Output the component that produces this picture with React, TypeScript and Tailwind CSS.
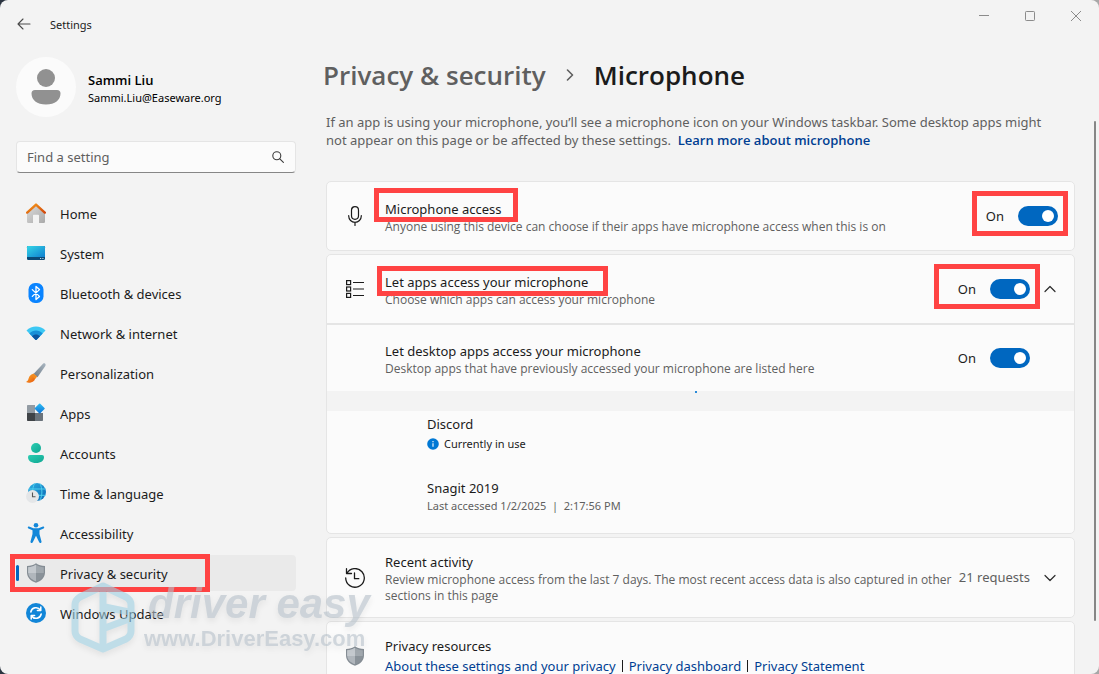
import type { ReactNode } from 'react';

type TNavItem = {
  id: string;
  label: string;
  icon: ReactNode;
};

type THighlightProps = {
  className: string;
};

type TToggleProps = {
  label: string;
  children?: ReactNode;
};

type TSettingTextProps = {
  title: string;
  description: string;
  children?: ReactNode;
};

const HomeIcon = () => (
  <svg viewBox="0 0 20 20" className="size-5" aria-hidden="true">
    <defs>
      <linearGradient id="home-wall" x1="0" y1="0" x2="1" y2="1">
        <stop offset="0" stopColor="#dcdcdc" />
        <stop offset="1" stopColor="#a9a9a9" />
      </linearGradient>
      <linearGradient id="home-roof" x1="0" y1="0" x2="1" y2="1">
        <stop offset="0" stopColor="#f59a1b" />
        <stop offset="1" stopColor="#d3480d" />
      </linearGradient>
    </defs>
    <path d="M1 9.5 10 1.8l9 7.7v9.3a1.2 1.2 0 0 1-1.2 1.2H13v-7.6a.7.7 0 0 0-.7-.7H7.700a.7.7 0 0 0-.7.7V20H2.200A1.200 1.200 0 0 1 1 18.800Z" fill="url(#home-wall)" />
    <path d="M1.200 9.600 10 1.600l8.800 8" fill="none" stroke="url(#home-roof)" strokeWidth="2.400" strokeLinecap="round" strokeLinejoin="round" />
  </svg>
);

const SystemIcon = () => (
  <svg viewBox="0 0 20 20" className="size-5" aria-hidden="true">
    <defs>
      <linearGradient id="system-screen" x1="0" y1="0" x2="1" y2="1">
        <stop offset="0" stopColor="#35d6e6" />
        <stop offset="1" stopColor="#0f7fd0" />
      </linearGradient>
    </defs>
    <rect x="1" y="3" width="18" height="14" rx="1.200" fill="#0b4a77" />
    <path d="M2.200 3h15.600A1.200 1.200 0 0 1 19 4.200V14H1V4.200A1.200 1.200 0 0 1 2.200 3Z" fill="url(#system-screen)" />
    <path d="M14 15.500h1.200M16.300 15.500h1.200" stroke="#b9d6e8" />
  </svg>
);

const BluetoothIcon = () => (
  <svg viewBox="0 0 20 20" className="size-5" aria-hidden="true">
    <rect x="2.500" y="0" width="15" height="20" rx="6.500" fill="#0a84ff" />
    <path d="m6.300 6.600 7.200 6.800L10 16.600V3.400l3.500 3.200-7.200 6.800" fill="none" stroke="#fff" strokeWidth="1.300" strokeLinejoin="round" strokeLinecap="round" />
  </svg>
);

const NetworkIcon = () => (
  <svg viewBox="0 0 20 20" className="size-5" aria-hidden="true">
    <path d="M.5 7.500C5.500 2 14.500 2 19.500 7.500L10.600 16.700a.9.9 0 0 1-1.200 0Z" fill="#3cc8f4" />
    <path d="M3.300 10.400c3.700-4 9.700-4 13.400 0l-6.100 6.300a.9.9 0 0 1-1.200 0Z" fill="#1690d8" />
    <path d="M6 13.200c2.200-2.400 5.800-2.400 8 0l-3.400 3.500a.9.9 0 0 1-1.200 0Z" fill="#0b559f" />
  </svg>
);

const BrushIcon = () => (
  <svg viewBox="0 0 20 20" className="size-5" aria-hidden="true">
    <defs>
      <linearGradient id="brush-handle" x1="0" y1="1" x2="1" y2="0">
        <stop offset="0" stopColor="#6f7c88" />
        <stop offset="1" stopColor="#a9b6c1" />
      </linearGradient>
      <linearGradient id="brush-tip" x1="0" y1="0" x2="1" y2="1">
        <stop offset="0" stopColor="#f9a62b" />
        <stop offset="1" stopColor="#e8590c" />
      </linearGradient>
    </defs>
    <path d="M17 .8c1.600-1.300 3.400.3 2.300 2.200L11.500 14.200 7.500 11Z" fill="url(#brush-handle)" />
    <path d="M4 12.700c2-2.300 5.700.2 5.100 3C8.500 18.800 4 20.400.6 19.300c-.5-.2-.5-.7 0-.9 2.300-.9 1.500-3.600 3.400-5.700Z" fill="url(#brush-tip)" />
    <path d="m4.800 12 2.700-1.600 3.700 3.200-2 2.300Z" fill="#f28b20" />
  </svg>
);

const AppsIcon = () => (
  <svg viewBox="0 0 20 20" className="size-5" aria-hidden="true">
    <defs>
      <linearGradient id="apps-diamond" x1="0" y1="0" x2="1" y2="1">
        <stop offset="0" stopColor="#2ec0f4" />
        <stop offset="1" stopColor="#0b6fd6" />
      </linearGradient>
    </defs>
    <path d="M1.800 2H9v8H1V2.800A.8.8 0 0 1 1.800 2Z" fill="#929ba3" />
    <path d="M1 10h8v8H1.800a.8.8 0 0 1-.8-.8Z" fill="#3f4347" />
    <path d="M9 10h8v7.200a.8.8 0 0 1-.8.8H9Z" fill="#6a737b" />
    <rect x="9.900" y="1.700" width="7.600" height="7.600" rx=".8" transform="rotate(45 13.700 5.500)" fill="url(#apps-diamond)" />
  </svg>
);

const AccountsIcon = () => (
  <svg viewBox="0 0 20 20" className="size-5" aria-hidden="true">
    <defs>
      <linearGradient id="accounts" x1="0" y1="0" x2="1" y2="1">
        <stop offset="0" stopColor="#2bcdb2" />
        <stop offset="1" stopColor="#10a792" />
      </linearGradient>
    </defs>
    <circle cx="10" cy="5" r="5" fill="url(#accounts)" />
    <path d="M4 12h12a2 2 0 0 1 2 2c0 3.700-3 6-8 6s-8-2.300-8-6a2 2 0 0 1 2-2Z" fill="url(#accounts)" />
  </svg>
);

const TimeIcon = () => (
  <svg viewBox="0 0 20 20" className="size-5" aria-hidden="true">
    <defs>
      <linearGradient id="globe" x1="0" y1="0" x2="1" y2="1">
        <stop offset="0" stopColor="#2db1e3" />
        <stop offset="1" stopColor="#0b69b5" />
      </linearGradient>
    </defs>
    <circle cx="11" cy="9" r="9" fill="url(#globe)" />
    <path d="M3 6h16.500M3 12.300h16.500M8.500.5c-2.500 5-2.500 12 0 17M14 .7c2.500 5 2.500 11.500 0 16.500" fill="none" stroke="#4fd0ee" strokeWidth="1" />
    <circle cx="6.500" cy="13.500" r="6.500" fill="#e4e6e8" />
    <path d="M6.500 9.500v4.300h3" fill="none" stroke="#555" strokeWidth="1.100" />
  </svg>
);

const AccessibilityIcon = () => (
  <svg viewBox="0 0 20 20" className="size-5" aria-hidden="true">
    <circle cx="10" cy="2.300" r="2.300" fill="#1387d9" />
    <path d="M3 3.600 7.500 5.200h5L17 3.600c1.300-.4 1.700 1.300.6 1.800L13.500 7.200v3.800l2 7.400c.3 1.500-1.700 2.100-2.300.8L10 12.700 6.800 19.200c-.6 1.300-2.600.7-2.300-.8l2-7.400V7.200L2.400 5.400C1.300 4.900 1.700 3.200 3 3.600Z" fill="#1387d9" />
  </svg>
);

const ShieldIcon = () => (
  <svg viewBox="0 0 20 20" className="size-5 shrink-0" aria-hidden="true">
    <path d="M10 .3c2.500 1.800 5.500 2.600 9 2.700v6.500c0 5.200-4 8.600-9 10.300-5-1.700-9-5.100-9-10.300V3C4.500 2.900 7.500 2.100 10 .3Z" fill="#858d94" />
    <path d="M10 1.700v16.600c-4.300-1.600-7.800-4.500-7.800-8.800V4.200c3.200-.1 5.500-.9 7.800-2.500Z" fill="#b0b6bc" />
    <path d="M10 1.700v8.300H2.200V4.200c3.200-.1 5.500-.9 7.800-2.500Z" fill="#c4c9ce" />
    <path d="M10 10h7.800c-.3 4-3.600 6.700-7.800 8.300Z" fill="#8a9299" />
    <path d="M10 1.700c2.300 1.600 4.600 2.400 7.800 2.500V10H10Z" fill="#a1a8ae" />
  </svg>
);

const UpdateIcon = () => (
  <svg viewBox="0 0 20 20" className="size-5" aria-hidden="true">
    <circle cx="10" cy="10" r="10" fill="#1286d8" />
    <path d="M4.800 9a5.300 5.300 0 0 1 9.600-2M15.200 11a5.300 5.300 0 0 1-9.600 2M14.800 4v3.400h-3.400M5.200 16v-3.400h3.400" fill="none" stroke="#fff" strokeWidth="1.500" strokeLinecap="round" strokeLinejoin="round" />
  </svg>
);

const MicIcon = () => (
  <svg viewBox="0 0 20 20" className="size-5 shrink-0" fill="none" stroke="#1b1b1b" strokeWidth="1.200" strokeLinecap="round" aria-hidden="true">
    <rect x="6.500" y=".7" width="7" height="12.600" rx="3.500" />
    <path d="M3.700 9.500v.5a6.300 6.300 0 0 0 12.600 0v-.5M10 16.500v3" />
  </svg>
);

const ListIcon = () => (
  <svg viewBox="0 0 20 20" className="size-5 shrink-0" fill="none" stroke="#1b1b1b" strokeWidth="1.200" aria-hidden="true">
    <rect x="1.600" y="1.600" width="4" height="4" />
    <rect x="1.600" y="8" width="4" height="4" />
    <rect x="1.600" y="14.400" width="4" height="4" />
    <path d="M8 3.500h11M8 10h11M8 16.500h11" />
  </svg>
);

const HistoryIcon = () => (
  <svg viewBox="0 0 20 20" className="size-5 shrink-0" fill="none" stroke="#1b1b1b" strokeWidth="1.300" strokeLinecap="round" strokeLinejoin="round" aria-hidden="true">
    <path d="M1.800 5.500A9.300 9.300 0 1 1 .7 10M1.500.7v4.800h5M9.500 5v5.700h4.300" />
  </svg>
);

const ChevronIcon = ({ className = '' }: { className?: string }) => (
  <svg viewBox="0 0 12 12" className={`size-3 ${className}`} fill="none" stroke="#2b2b2b" strokeWidth="1.200" strokeLinecap="round" strokeLinejoin="round" aria-hidden="true">
    <path d="m1 3.500 5 5 5-5" />
  </svg>
);

const NAV_ITEMS: TNavItem[] = [
  { id: 'home', label: 'Home', icon: <HomeIcon /> },
  { id: 'system', label: 'System', icon: <SystemIcon /> },
  { id: 'bluetooth', label: 'Bluetooth & devices', icon: <BluetoothIcon /> },
  { id: 'network', label: 'Network & internet', icon: <NetworkIcon /> },
  { id: 'personalization', label: 'Personalization', icon: <BrushIcon /> },
  { id: 'apps', label: 'Apps', icon: <AppsIcon /> },
  { id: 'accounts', label: 'Accounts', icon: <AccountsIcon /> },
  { id: 'time', label: 'Time & language', icon: <TimeIcon /> },
  { id: 'accessibility', label: 'Accessibility', icon: <AccessibilityIcon /> },
  { id: 'privacy', label: 'Privacy & security', icon: <ShieldIcon /> },
  { id: 'update', label: 'Windows Update', icon: <UpdateIcon /> },
];

const Highlight = ({ className }: THighlightProps) => (
  <span className={`pointer-events-none absolute z-10 border-5 border-[#ff4343] ${className}`} />
);

const Toggle = ({ label, children }: TToggleProps) => (
  <label className="relative flex h-5 items-center gap-3.5">
    <span className="pt-0.5">On</span>
    <input
      type="checkbox"
      role="switch"
      aria-label={label}
      defaultChecked
      className="flex h-5 w-10 appearance-none items-center rounded-full bg-gray-400 px-1 before:size-3 before:rounded-full before:bg-white checked:justify-end checked:bg-[#0067c0]"
    />
    {children}
  </label>
);

const SettingText = ({ title, description, children }: TSettingTextProps) => (
  <div className="min-w-0 flex-1 pt-px">
    <h2 className="relative w-fit leading-5">
      {title}
      {children}
    </h2>
    <p className="font-['Open_Sans',sans-serif] text-xs leading-4 text-[#5f5f5f]">{description}</p>
  </div>
);

const Sidebar = () => (
  <aside className="w-[296px] shrink-0 pt-[9px] pl-4">
    <div className="flex items-center gap-3">
      <div className="grid size-[60px] place-items-center rounded-full bg-[#fbfbfb]">
        <svg viewBox="0 0 30 36" className="h-9 w-[30px]" fill="#919191" aria-hidden="true">
          <circle cx="15" cy="9" r="9" />
          <path d="M4 21h22a3.500 3.500 0 0 1 3.500 3.500C29.500 31 24 35.500 15 35.500S.5 31 .5 24.500A3.500 3.500 0 0 1 4 21Z" />
        </svg>
      </div>
      <div className="pt-0.5 text-black">
        <div className="font-['Open_Sans',sans-serif] leading-5 font-semibold">Sammi Liu</div>
        <div className="text-[11px] leading-4">Sammi.Liu@Easeware.org</div>
      </div>
    </div>

    <div className="relative mt-6">
      <input
        type="search"
        aria-label="Find a setting"
        placeholder="Find a setting"
        className="block h-8 w-full rounded border border-[#e5e5e5] border-b-[#868686] bg-[#fbfbfb] pr-8 pl-2.5 placeholder:text-[#5f5f5f]"
      />
      <svg viewBox="0 0 12 12" className="absolute top-2.5 right-3 size-3" fill="none" stroke="#3b3b3b" strokeWidth="1.100" strokeLinecap="round" aria-hidden="true">
        <circle cx="4.800" cy="4.800" r="4" />
        <path d="m7.800 7.800 3.600 3.600" />
      </svg>
    </div>

    <nav className="mt-[22px] grid gap-1">
      {NAV_ITEMS.map((item) => {
        const is_active = item.id === 'privacy';

        return (
          <a
            key={item.id}
            href={`#${item.id}`}
            className={['relative flex h-9 items-center gap-3.5 rounded pl-2.5', is_active ? 'bg-[#eaeaea]' : ''].join(' ')}>
            {is_active && <span className="absolute left-0 h-4 w-[3px] rounded-full bg-[#0067c0]" />}
            {item.icon}
            <span className="pt-1">{item.label}</span>
            {is_active && <Highlight className="-top-px -bottom-px -left-1.5 w-[200px]" />}
          </a>
        );
      })}
    </nav>
  </aside>
);

const Watermark = () => (
  <div className="pointer-events-none absolute top-[581px] left-[70px] z-20 flex items-start gap-2 font-['Liberation_Sans',sans-serif] font-bold opacity-60 drop-shadow-md">
    <svg viewBox="0 0 66 74" className="h-[74px] w-[66px]" fill="none" stroke="#9dcfe2" strokeWidth="7" strokeLinejoin="round" aria-hidden="true">
      <path d="M33 5 56 16q5 3 5 8v26q0 5-5 8L33 68 10 58q-5-3-5-8V24q0-5 5-8Z" />
      <path d="M33 5v63M35 26l24 5M35 47l24-9" />
    </svg>
    <div className="text-[#b4bfc8]">
      <div className="pl-1 text-[42px] leading-[46px] italic">driver easy</div>
      <div className="text-[22px] leading-6">www.DriverEasy.com</div>
    </div>
  </div>
);

const CARD = 'rounded-[5px] border border-[#e5e5e5] bg-[#fbfbfb]';

export default function App() {
  return (
    <div className="h-screen bg-linear-to-r from-[#2b3440] to-[#a8a8a8] font-['Noto_Sans',sans-serif] text-[13px] text-[#1b1b1b]">
      <div className="relative flex h-full flex-col overflow-hidden rounded-lg bg-[#f3f3f3]">
        <header className="flex h-12 shrink-0 items-center">
          <button type="button" aria-label="Back" className="ml-4 grid h-8 w-4 place-items-center">
            <svg viewBox="0 0 14 12" className="h-3 w-3.5" fill="none" stroke="#4a4a4a" strokeWidth="1.100" strokeLinecap="round" strokeLinejoin="round" aria-hidden="true">
              <path d="M13 6H1M6 1 1 6l5 5" />
            </svg>
          </button>
          <h1 className="ml-[18px] pt-0.5 text-[11px]">Settings</h1>
          <div className="ml-auto flex self-start">
            <button type="button" aria-label="Minimize" className="grid h-8 w-[46px] place-items-center">
              <svg viewBox="0 0 12 12" className="size-3" stroke="#8b8b8b" aria-hidden="true">
                <path d="M1 5.500h10" />
              </svg>
            </button>
            <button type="button" aria-label="Maximize" className="grid h-8 w-[46px] place-items-center">
              <svg viewBox="0 0 12 12" className="size-3" fill="none" stroke="#8b8b8b" aria-hidden="true">
                <rect x="1.500" y="1.500" width="9" height="9" rx=".8" />
              </svg>
            </button>
            <button type="button" aria-label="Close" className="grid h-8 w-[46px] place-items-center">
              <svg viewBox="0 0 12 12" className="size-3" stroke="#8b8b8b" aria-hidden="true">
                <path d="m1 1 10 10M11 1 1 11" />
              </svg>
            </button>
          </div>
        </header>

        <div className="flex min-h-0 flex-1">
          <Sidebar />

          <main className="min-w-0 flex-1 pt-[7px] pr-6 pl-[30px]">
            <div className="-ml-[3px] flex items-center gap-5 font-['Open_Sans',sans-serif] text-[26px] leading-10 font-semibold">
              <a href="#privacy" className="text-[#5f5f5f]">
                Privacy &amp; security
              </a>
              <svg viewBox="0 0 8 12" className="h-3 w-2" fill="none" stroke="#5f5f5f" strokeWidth="1.600" strokeLinecap="round" strokeLinejoin="round" aria-hidden="true">
                <path d="m1.500 1 5 5-5 5" />
              </svg>
              <span>Microphone</span>
            </div>

            <p className="mt-[18px] pr-4 leading-[18px] text-[#5f5f5f]">
              If an app is using your microphone, you’ll see a microphone icon on your Windows taskbar. Some desktop apps might
              not appear on this page or be affected by these settings.&nbsp;{' '}
              <a href="#learn-more" className="font-['Open_Sans',sans-serif] font-semibold text-[#003e92]">
                Learn more about microphone
              </a>
            </p>

            <div className="mt-8 grid gap-[3px]">
              <section className={`${CARD} flex h-[70px] items-center gap-5 pr-4 pl-[18px]`}>
                <MicIcon />
                <SettingText
                  title="Microphone access"
                  description="Anyone using this device can choose if their apps have microphone access when this is on">
                  <Highlight className="-top-[11px] -right-4 -bottom-[3px] -left-[11px]" />
                </SettingText>
                <Toggle label="Microphone access">
                  <Highlight className="-top-[15px] -right-2.5 -bottom-2.5 -left-3.5" />
                </Toggle>
              </section>

              <section className={CARD}>
                <div className="flex h-[70px] items-center gap-5 border-b-2 border-[#e5e5e5] pr-[18px] pl-[18px]">
                  <ListIcon />
                  <SettingText title="Let apps access your microphone" description="Choose which apps can access your microphone">
                    <Highlight className="-top-1.5 -right-5 -bottom-1 -left-2" />
                  </SettingText>
                  <div className="flex items-center gap-3.5">
                    <Toggle label="Let apps access your microphone">
                      <Highlight className="-top-[15px] -right-2.5 -bottom-2.5 -left-6" />
                    </Toggle>
                    <button type="button" aria-label="Collapse">
                      <ChevronIcon className="rotate-180" />
                    </button>
                  </div>
                </div>

                <div className="flex h-[66px] items-center pr-11 pl-[58px]">
                  <SettingText
                    title="Let desktop apps access your microphone"
                    description="Desktop apps that have previously accessed your microphone are listed here"
                  />
                  <Toggle label="Let desktop apps access your microphone" />
                </div>

                <div className="h-5 bg-[#f3f3f3]">
                  <div className="ml-[368px] h-0.5 w-0.5 bg-[#2a8ad8]" />
                </div>

                <ul className="grid gap-6 pt-[3px] pb-[19px] pl-[100px]">
                  <li>
                    <div className="leading-5">Discord</div>
                    <div className="flex items-center gap-[5px] text-[11px] leading-5">
                      <svg viewBox="0 0 12 12" className="size-3" aria-hidden="true">
                        <circle cx="6" cy="6" r="5.800" fill="#0078d4" />
                        <path d="M6 5.200v3.600M6 3v1.200" stroke="#fff" strokeWidth="1.100" />
                      </svg>
                      Currently in use
                    </div>
                  </li>
                  <li>
                    <div className="leading-5">Snagit 2019</div>
                    <div className="text-[11px] leading-4 text-[#5f5f5f]">Last accessed 1/2/2025&nbsp; |&nbsp; 2:17:56 PM</div>
                  </li>
                </ul>
              </section>

              <section className={`${CARD} flex h-[81px] items-center pr-[18px] pl-[18px]`}>
                <HistoryIcon />
                <div className="ml-5 flex min-w-0 flex-1 items-center gap-1">
                  <SettingText
                    title="Recent activity"
                    description="Review microphone access from the last 7 days. The most recent access data is also captured in other sections in this page"
                  />
                  <div className="flex items-center gap-3.5 text-[#5f5f5f]">
                    21 requests
                    <button type="button" aria-label="Expand">
                      <ChevronIcon />
                    </button>
                  </div>
                </div>
              </section>

              <section className={`${CARD} flex h-[70px] items-center gap-5 pr-4 pl-[18px]`}>
                <ShieldIcon />
                <div>
                  <h2 className="leading-5">Privacy resources</h2>
                  <div className="flex items-center gap-1.5 leading-5 text-[#003e92]">
                    <a href="#about">About these settings and your privacy</a>
                    <span className="h-3 w-px bg-[#1b1b1b]" />
                    <a href="#dashboard">Privacy dashboard</a>
                    <span className="h-3 w-px bg-[#1b1b1b]" />
                    <a href="#statement">Privacy Statement</a>
                  </div>
                </div>
              </section>
            </div>
          </main>
        </div>

        <div className="absolute top-[121px] right-[3px] h-[500px] w-0.5 rounded-full bg-[#868686]" />
        <Watermark />
      </div>
    </div>
  );
}
